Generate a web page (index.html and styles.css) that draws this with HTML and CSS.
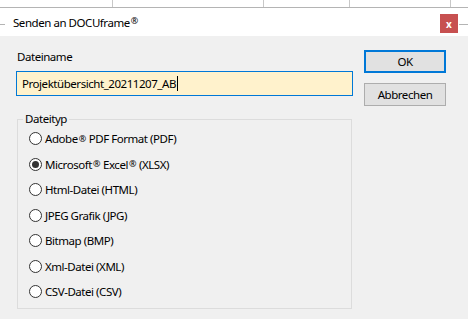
FILE: index.html
```html
<!DOCTYPE html>
<html lang="de">
<head>
    <meta charset="UTF-8">
    <title>Senden an DOCUframe®</title>
    <link rel="stylesheet" href="styles.css">
</head>
<body>
    <!-- Spreadsheet behind the dialog -->
    <div class="sheet">
        <span class="cell c1"></span>
        <span class="cell c2"></span>
        <span class="cell c3"></span>
        <span class="cell c4"></span>
    </div>

    <div class="titlerow">
        <div class="titlebar">
            <span class="title">Senden an DOCUframe<sup>®</sup></span>
            <button class="close" aria-label="Schließen">x</button>
        </div>
    </div>

    <div class="content">
        <div class="main">
            <label class="label" for="filename">Dateiname</label>
            <div class="input" id="filename">Projektübersicht_20211207_AB<span class="caret"></span></div>

            <fieldset class="group">
                <legend>Dateityp</legend>
                <label class="radio"><span class="dot"></span>Adobe<sup>®</sup> PDF Format (PDF)</label>
                <label class="radio checked"><span class="dot"></span>Microsoft<sup>®</sup> Excel<sup>®</sup> (XLSX)</label>
                <label class="radio"><span class="dot"></span>Html-Datei (HTML)</label>
                <label class="radio"><span class="dot"></span>JPEG Grafik (JPG)</label>
                <label class="radio"><span class="dot"></span>Bitmap (BMP)</label>
                <label class="radio"><span class="dot"></span>Xml-Datei (XML)</label>
                <label class="radio"><span class="dot"></span>CSV-Datei (CSV)</label>
            </fieldset>
        </div>

        <div class="actions">
            <button class="button default">OK</button>
            <button class="button">Abbrechen</button>
        </div>
    </div>
</body>
</html>
```

FILE: styles.css
```css
/* Global Styles */
body {
    margin: 0;
    background: #f0f0f0;
    font-family: "Noto Sans", "Open Sans", Arial, sans-serif;
    font-size: 11.5px;
    letter-spacing: -0.45px;
    color: #000;
    overflow: hidden;
}

/* Sheet behind the dialog */
.sheet {
    display: flex;
    height: 7px;
    background: #fff;
    border-bottom: 1px solid #b4b4b4;
}

.cell {
    border-right: 1px solid #c8c8c8;
}

.c1 { width: 112px; }
.c2 { width: 150px; }
.c3 { width: 85px; }
.c4 { width: 100px; }

/* Title bar */
.titlerow {
    background: #fff linear-gradient(#b4b4b4, #b4b4b4) no-repeat 0 16px / 100% 1px;
    height: 28px;
}

.titlebar {
    display: flex;
    align-items: flex-start;
    justify-content: space-between;
    height: 28px;
    margin: 0 9px 0 5px;
    background: #fff;
}

.title {
    padding: 7px 0 0 8px;
    line-height: 16px;
}

.title sup,
.radio sup {
    font-size: 9px;
    line-height: 0;
    vertical-align: 3px;
    margin: 0 3px 0 1px;
}

.close {
    width: 18px;
    height: 19px;
    margin: 6px 1px 0 0;
    padding: 0;
    border: none;
    background: #c75050;
    color: #fff;
    font-family: inherit;
    font-size: 10px;
    font-weight: bold;
    line-height: 18px;
}

/* Dialog content */
.content {
    display: flex;
    padding-left: 16px;
}

.main {
    display: flex;
    flex-direction: column;
    width: 337px;
    padding-top: 13px;
}

.label {
    line-height: 16px;
    padding-left: 1px;
}

.input {
    display: flex;
    align-items: center;
    height: 23px;
    margin-top: 6px;
    padding-left: 5px;
    border: 1px solid #0078d7;
    background: #fff2cc;
    line-height: 16px;
}

.caret {
    width: 1px;
    height: 15px;
    margin-left: 1px;
    background: #000;
}

/* Radio group */
.group {
    margin: 16px 0 0 1px;
    padding: 0 0 3px 11px;
    border: 1px solid #dcdcdc;
    width: 322px;
}

.group legend {
    margin-left: -6px;
    padding: 0 2px;
    line-height: 14px;
}

.radio {
    display: flex;
    align-items: center;
    height: 25.5px;
}

.dot {
    position: relative;
    box-sizing: border-box;
    width: 13px;
    height: 13px;
    margin-right: 3px;
    border: 1px solid #333;
    border-radius: 50%;
    background: #fff;
}

.checked .dot::after {
    content: "";
    position: absolute;
    left: 2px;
    top: 2px;
    width: 7px;
    height: 7px;
    border-radius: 50%;
    background: #333;
}

/* Buttons */
.actions {
    display: flex;
    flex-direction: column;
    gap: 10px;
    margin-left: 11px;
    padding-top: 14px;
}

.button {
    box-sizing: border-box;
    width: 82px;
    height: 23px;
    padding: 0;
    border: 1px solid #adadad;
    background: #e1e1e1;
    font-family: inherit;
    font-size: 11.5px;
    letter-spacing: -0.45px;
    color: #000;
}

.button.default {
    border: 2px solid #0078d7;
}
```
